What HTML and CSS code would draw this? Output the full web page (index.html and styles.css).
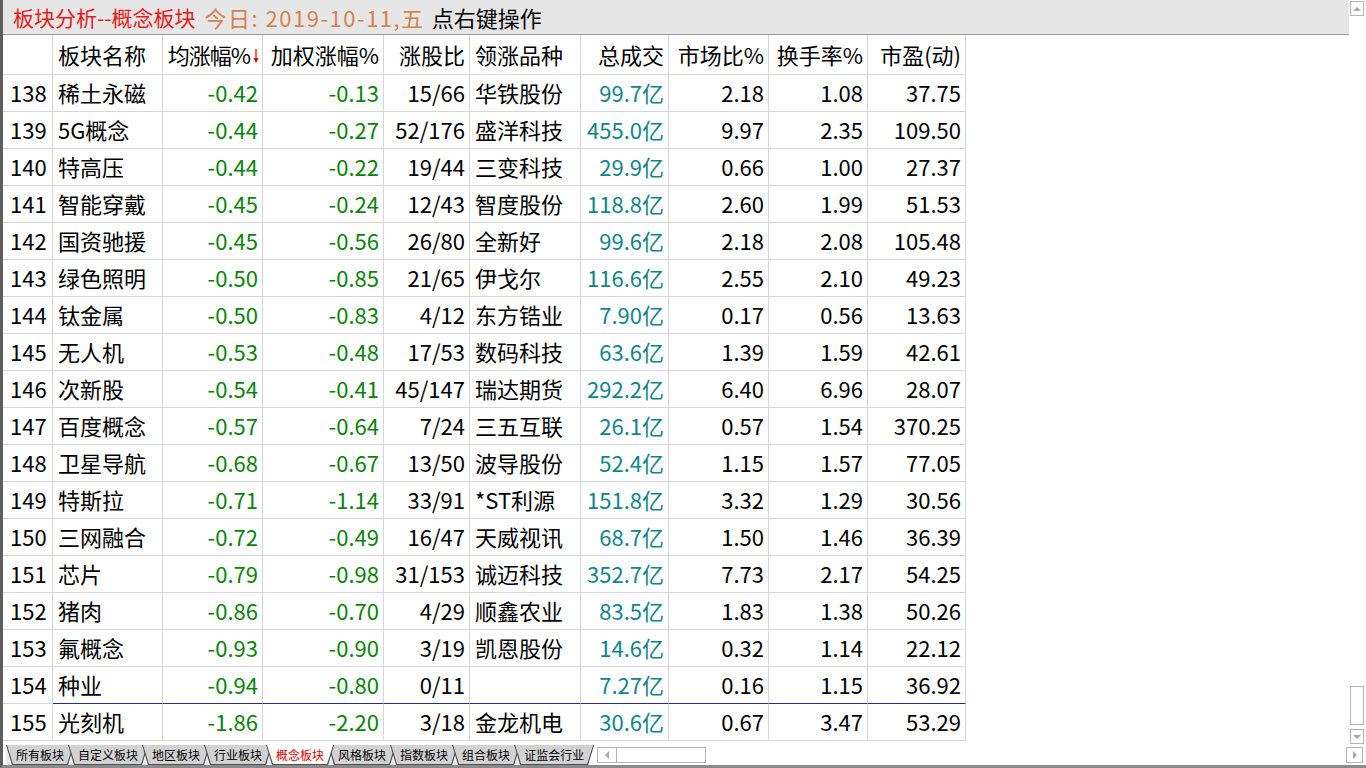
FILE: index.html
```html
<!DOCTYPE html>
<html lang="zh-CN">
<head>
<meta charset="utf-8">
<title>板块分析--概念板块</title>
<link rel="stylesheet" href="styles.css">
</head>
<body>
<div class="frame">
  <div class="top">
    <div class="main">
      <div class="titlebar">
        <span class="t-red">板块分析--概念板块</span>
        <span class="t-date">今日: 2019-10-11,五</span>
        <span class="t-hint">点右键操作</span>
      </div>
      <table class="grid">
        <colgroup>
          <col class="c-no"><col class="c-name"><col class="c-avg"><col class="c-wt"><col class="c-ratio">
          <col class="c-lead"><col class="c-vol"><col class="c-mkt"><col class="c-turn"><col class="c-pe">
        </colgroup>
        <thead>
          <tr class="head">
            <th></th>
            <th class="l">板块名称</th>
            <th class="r sorted">均涨幅%<svg class="sort" width="6" height="15" viewBox="0 0 6 15"><path d="M3 0V13" stroke="#e00000" stroke-width="1.2"/><path d="M0.5 9L3 14L5.5 9Z" fill="#e00000"/></svg></th>
            <th class="r">加权涨幅%</th>
            <th class="r">涨股比</th>
            <th class="l">领涨品种</th>
            <th class="r">总成交</th>
            <th class="r">市场比%</th>
            <th class="r">换手率%</th>
            <th class="r">市盈(动)</th>
          </tr>
        </thead>
        <tbody>
          <tr><td class="no">138</td><td class="l">稀土永磁</td><td class="g">-0.42</td><td class="g">-0.13</td><td class="r">15/66</td><td class="l">华铁股份</td><td class="t">99.7亿</td><td class="r">2.18</td><td class="r">1.08</td><td class="r">37.75</td></tr>
          <tr><td class="no">139</td><td class="l">5G概念</td><td class="g">-0.44</td><td class="g">-0.27</td><td class="r">52/176</td><td class="l">盛洋科技</td><td class="t">455.0亿</td><td class="r">9.97</td><td class="r">2.35</td><td class="r">109.50</td></tr>
          <tr><td class="no">140</td><td class="l">特高压</td><td class="g">-0.44</td><td class="g">-0.22</td><td class="r">19/44</td><td class="l">三变科技</td><td class="t">29.9亿</td><td class="r">0.66</td><td class="r">1.00</td><td class="r">27.37</td></tr>
          <tr><td class="no">141</td><td class="l">智能穿戴</td><td class="g">-0.45</td><td class="g">-0.24</td><td class="r">12/43</td><td class="l">智度股份</td><td class="t">118.8亿</td><td class="r">2.60</td><td class="r">1.99</td><td class="r">51.53</td></tr>
          <tr><td class="no">142</td><td class="l">国资驰援</td><td class="g">-0.45</td><td class="g">-0.56</td><td class="r">26/80</td><td class="l">全新好</td><td class="t">99.6亿</td><td class="r">2.18</td><td class="r">2.08</td><td class="r">105.48</td></tr>
          <tr><td class="no">143</td><td class="l">绿色照明</td><td class="g">-0.50</td><td class="g">-0.85</td><td class="r">21/65</td><td class="l">伊戈尔</td><td class="t">116.6亿</td><td class="r">2.55</td><td class="r">2.10</td><td class="r">49.23</td></tr>
          <tr><td class="no">144</td><td class="l">钛金属</td><td class="g">-0.50</td><td class="g">-0.83</td><td class="r">4/12</td><td class="l">东方锆业</td><td class="t">7.90亿</td><td class="r">0.17</td><td class="r">0.56</td><td class="r">13.63</td></tr>
          <tr><td class="no">145</td><td class="l">无人机</td><td class="g">-0.53</td><td class="g">-0.48</td><td class="r">17/53</td><td class="l">数码科技</td><td class="t">63.6亿</td><td class="r">1.39</td><td class="r">1.59</td><td class="r">42.61</td></tr>
          <tr><td class="no">146</td><td class="l">次新股</td><td class="g">-0.54</td><td class="g">-0.41</td><td class="r">45/147</td><td class="l">瑞达期货</td><td class="t">292.2亿</td><td class="r">6.40</td><td class="r">6.96</td><td class="r">28.07</td></tr>
          <tr><td class="no">147</td><td class="l">百度概念</td><td class="g">-0.57</td><td class="g">-0.64</td><td class="r">7/24</td><td class="l">三五互联</td><td class="t">26.1亿</td><td class="r">0.57</td><td class="r">1.54</td><td class="r">370.25</td></tr>
          <tr><td class="no">148</td><td class="l">卫星导航</td><td class="g">-0.68</td><td class="g">-0.67</td><td class="r">13/50</td><td class="l">波导股份</td><td class="t">52.4亿</td><td class="r">1.15</td><td class="r">1.57</td><td class="r">77.05</td></tr>
          <tr><td class="no">149</td><td class="l">特斯拉</td><td class="g">-0.71</td><td class="g">-1.14</td><td class="r">33/91</td><td class="l">*ST利源</td><td class="t">151.8亿</td><td class="r">3.32</td><td class="r">1.29</td><td class="r">30.56</td></tr>
          <tr><td class="no">150</td><td class="l">三网融合</td><td class="g">-0.72</td><td class="g">-0.49</td><td class="r">16/47</td><td class="l">天威视讯</td><td class="t">68.7亿</td><td class="r">1.50</td><td class="r">1.46</td><td class="r">36.39</td></tr>
          <tr><td class="no">151</td><td class="l">芯片</td><td class="g">-0.79</td><td class="g">-0.98</td><td class="r">31/153</td><td class="l">诚迈科技</td><td class="t">352.7亿</td><td class="r">7.73</td><td class="r">2.17</td><td class="r">54.25</td></tr>
          <tr><td class="no">152</td><td class="l">猪肉</td><td class="g">-0.86</td><td class="g">-0.70</td><td class="r">4/29</td><td class="l">顺鑫农业</td><td class="t">83.5亿</td><td class="r">1.83</td><td class="r">1.38</td><td class="r">50.26</td></tr>
          <tr><td class="no">153</td><td class="l">氟概念</td><td class="g">-0.93</td><td class="g">-0.90</td><td class="r">3/19</td><td class="l">凯恩股份</td><td class="t">14.6亿</td><td class="r">0.32</td><td class="r">1.14</td><td class="r">22.12</td></tr>
          <tr class="mark"><td class="no">154</td><td class="l">种业</td><td class="g">-0.94</td><td class="g">-0.80</td><td class="r">0/11</td><td class="l"></td><td class="t">7.27亿</td><td class="r">0.16</td><td class="r">1.15</td><td class="r">36.92</td></tr>
          <tr><td class="no">155</td><td class="l">光刻机</td><td class="g">-1.86</td><td class="g">-2.20</td><td class="r">3/18</td><td class="l">金龙机电</td><td class="t">30.6亿</td><td class="r">0.67</td><td class="r">3.47</td><td class="r">53.29</td></tr>
        </tbody>
      </table>
    </div>
    <div class="vscroll">
      <div class="sbtn"><span class="tri-up"></span></div>
      <div class="track"></div>
      <div class="thumb"></div>
      <div class="sbtn down"><span class="tri-down"></span></div>
    </div>
  </div>
  <div class="bottombar">
    <div class="tabs">
      <div class="tab"><span>所有板块</span></div>
      <div class="tab"><span>自定义板块</span></div>
      <div class="tab"><span>地区板块</span></div>
      <div class="tab"><span>行业板块</span></div>
      <div class="tab active"><span>概念板块</span></div>
      <div class="tab"><span>风格板块</span></div>
      <div class="tab"><span>指数板块</span></div>
      <div class="tab"><span>组合板块</span></div>
      <div class="tab"><span>证监会行业</span></div>
    </div>
    <div class="hscroll"><div class="hbtn"><span class="tri-left"></span></div></div>
    <div class="spacer"></div>
    <div class="sbtn corner"><span class="tri-right"></span></div>
  </div>
</div>
</body>
</html>
```

FILE: styles.css
```css
html, body {
  margin: 0;
  padding: 0;
  background: #ffffff;
}
body {
  font-family: "Noto Sans CJK SC", "Noto Sans", sans-serif;
  color: #000;
}
.frame {
  width: 1366px;
  height: 768px;
  box-sizing: border-box;
  border-left: 3px solid #5e5e5e;
  border-bottom: 3px solid #8a8a8a;
  display: flex;
  flex-direction: column;
  overflow: hidden;
}
.top {
  flex: 1;
  display: flex;
  min-height: 0;
}
.main {
  flex: 1;
  display: flex;
  flex-direction: column;
  min-width: 0;
}
.titlebar {
  height: 35px;
  box-sizing: border-box;
  background: #e6e6e6;
  border-bottom: 1px solid #9c9c9c;
  padding-left: 10px;
  font-size: 21px;
  line-height: 34px;
  white-space: nowrap;
  display: flex;
  gap: 9px;
}
.t-red { color: #e41b17; }
.t-date { color: #d4844c; font-size: 22px; letter-spacing: 1.5px; }
.t-hint { color: #000; font-size: 22px; margin-left: -2px; }

.grid {
  border-collapse: separate;
  border-spacing: 0;
  table-layout: fixed;
  width: 963px;
  font-size: 22px;
  white-space: nowrap;
}
.c-no { width: 50px; }
.c-name { width: 110px; }
.c-avg { width: 100px; }
.c-wt { width: 121px; }
.c-ratio { width: 86px; }
.c-lead { width: 111px; }
.c-vol { width: 88px; }
.c-mkt { width: 100px; }
.c-turn { width: 99px; }
.c-pe { width: 98px; }

.grid th, .grid td {
  box-sizing: border-box;
  border-right: 1px solid #d6d6d6;
  border-bottom: 1px solid #d6d6d6;
  padding: 0 4px 0 5px;
  font-weight: normal;
  overflow: hidden;
  line-height: 30px;
}
.grid td { padding-bottom: 3px; }
.grid th { padding-bottom: 1px; }
.grid tr { height: 37px; }
.grid tr.head { height: 40px; }
.grid .l { text-align: left; }
.grid .r { text-align: right; }
.grid .no { text-align: left; padding-left: 7px; }
.grid .g { text-align: right; color: #0a840a; }
.grid .t { text-align: right; color: #10868a; }
.grid th.sorted { padding-left: 0; padding-right: 3px; letter-spacing: -1px; }
.sort { margin-left: 3px; vertical-align: 0px; }
.grid tr.mark td + td { border-bottom-color: #2a2a8c; }

.vscroll {
  width: 17px;
  display: flex;
  flex-direction: column;
  align-items: flex-start;
  background: #fff;
}
.sbtn {
  width: 14px;
  height: 15px;
  box-sizing: border-box;
  border: 1px solid #b4b4b4;
  margin: 1px 0 0 1px;
  display: flex;
  align-items: center;
  justify-content: center;
  background: #fff;
}
.sbtn.down { margin: 4px 0 1px 1px; }
.track { flex: 1; }
.thumb {
  width: 14px;
  height: 39px;
  box-sizing: border-box;
  border: 1px solid #b4b4b4;
  margin-left: 1px;
}
.tri-up, .tri-down, .tri-left, .tri-right {
  width: 0; height: 0;
  border: 4px solid transparent;
}
.tri-up { border-bottom: 4px solid #a8a8a8; border-top-width: 0; }
.tri-down { border-top: 4px solid #a8a8a8; border-bottom-width: 0; }
.tri-left { border-right: 4px solid #a8a8a8; border-left-width: 0; }
.tri-right { border-left: 4px solid #a8a8a8; border-right-width: 0; }

.bottombar {
  height: 20px;
  display: flex;
  align-items: stretch;
  background: #fff;
}
.tabs {
  display: flex;
  margin-left: 3px;
  background: #ececec;
}
.tab {
  position: relative;
  background: #505050;
  clip-path: polygon(0 0, 100% 0, calc(100% - 6px) 100%, 6px 100%);
  padding: 0 1px 1px 1px;
  margin-right: -6px;
}
.tab span {
  display: block;
  height: 19px;
  padding: 0 9px;
  background: #d2d2d2;
  clip-path: polygon(0 0, 100% 0, calc(100% - 6px) 100%, 6px 100%);
  font-size: 12px;
  line-height: 19px;
  color: #000;
  white-space: nowrap;
}
.tab.active { z-index: 2; }
.tab.active span { background: #ffffff; color: #e00000; }
.hscroll {
  margin: 2px 0 0 9px;
  width: 109px;
  height: 16px;
  box-sizing: border-box;
  border: 1px solid #b4b4b4;
  display: flex;
}
.hbtn {
  width: 18px;
  border-right: 1px solid #b4b4b4;
  display: flex;
  align-items: center;
  justify-content: center;
}
.spacer { flex: 1; }
.sbtn.corner {
  width: 17px;
  height: 16px;
  margin: 2px 3px 0 0;
}
```
